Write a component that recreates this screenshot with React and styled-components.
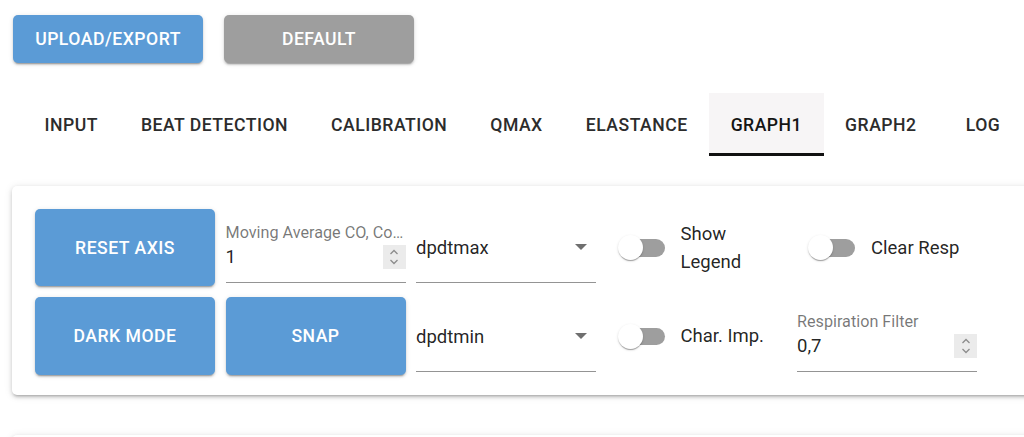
import React from "react";
import styled, { createGlobalStyle, css } from "styled-components";

const GlobalStyle = createGlobalStyle`
  html, body {
    margin: 0;
    padding: 0;
    background: #ffffff;
    overflow: hidden;
    font-family: Roboto, "Liberation Sans", Arial, sans-serif;
  }
  * { box-sizing: border-box; }
`;

const Page = styled.div`
  padding-top: 15px;
  width: 1024px;
  height: 437px;
  overflow: hidden;
`;

const TopBar = styled.div`
  display: flex;
  gap: 21px;
  padding-left: 13px;
`;

const elevation2 = css`
  box-shadow: 0px 3px 1px -2px rgba(0, 0, 0, 0.2), 0px 2px 2px 0px rgba(0, 0, 0, 0.14),
    0px 1px 5px 0px rgba(0, 0, 0, 0.12);
`;

const ActionButton = styled.button`
  width: ${(p) => p.$w || 190}px;
  height: ${(p) => p.$h || 48}px;
  border: none;
  border-radius: 5px;
  background: ${(p) => (p.$grey ? "#9e9e9e" : "#5b9bd6")};
  color: #ffffff;
  font-family: Roboto, "Liberation Sans", Arial, sans-serif;
  font-weight: 500;
  font-size: 17.6px;
  letter-spacing: 0.5px;
  text-transform: uppercase;
  display: flex;
  align-items: center;
  justify-content: center;
  padding: 0;
  cursor: pointer;
  ${elevation2}
`;

const TabsBar = styled.div`
  display: flex;
  margin-top: 30px;
  padding-left: 23px;
  height: 63px;
`;

const Tab = styled.div`
  flex: none;
  height: 63px;
  min-width: 90px;
  padding: 3px 21.5px 0;
  display: flex;
  align-items: center;
  justify-content: center;
  font-weight: 500;
  font-size: 17.6px;
  letter-spacing: 0.5px;
  text-transform: uppercase;
  white-space: nowrap;
  color: ${(p) => (p.$active ? "#141414" : "#2c2c2c")};
  background: ${(p) => (p.$active ? "#f7f5f6" : "transparent")};
  border-bottom: 3px solid ${(p) => (p.$active ? "#111111" : "transparent")};
`;

const Panel = styled.div`
  margin-top: 30px;
  margin-left: 12px;
  width: 1040px;
  padding: 23px 23px 20px;
  border-radius: 5px;
  background: #ffffff;
  box-shadow: 0px 3px 3px -2px rgba(0, 0, 0, 0.22), 0px 2px 4px 0px rgba(0, 0, 0, 0.14),
    0px 1px 8px 0px rgba(0, 0, 0, 0.1);
`;

const LowerPanel = styled(Panel)`
  margin-top: 40px;
  height: 120px;
`;

const ControlGrid = styled.div`
  display: grid;
  grid-template-columns: repeat(5, 180px);
  grid-template-rows: 77px 78px;
  column-gap: 10.5px;
  row-gap: 11px;
`;

const FieldCell = styled.div`
  display: flex;
  flex-direction: column;
  justify-content: flex-end;
  padding-bottom: 3px;
  min-width: 0;
`;

const FieldLabel = styled.div`
  font-size: 16.2px;
  line-height: 18px;
  color: rgba(0, 0, 0, 0.54);
  white-space: nowrap;
  overflow: hidden;
  text-overflow: ellipsis;
  margin-bottom: 3px;
`;

const InputRow = styled.div`
  display: flex;
  align-items: center;
  justify-content: space-between;
  height: ${(p) => (p.$select ? 47 : 38)}px;
  padding-bottom: ${(p) => (p.$select ? 23 : 13)}px;
  border-bottom: 1px solid rgba(0, 0, 0, 0.42);
`;

const InputValue = styled.span`
  font-size: 18.5px;
  line-height: 24px;
  color: rgba(0, 0, 0, 0.87);
`;

const Spinner = styled.span`
  width: 23px;
  height: 24px;
  background: #ebebeb;
  display: flex;
  align-items: center;
  justify-content: center;
`;

const SelectArrow = styled.span`
  width: 0;
  height: 0;
  border-left: 6.5px solid transparent;
  border-right: 6.5px solid transparent;
  border-top: 6.5px solid #6f6f6f;
  margin-right: 9px;
  margin-top: -2px;
`;

const SwitchCell = styled.div`
  display: flex;
  align-items: center;
`;

const SwitchRoot = styled.span`
  position: relative;
  flex: none;
  width: 73px;
  height: 47px;
`;

const SwitchTrack = styled.span`
  position: absolute;
  left: 15px;
  top: 15px;
  width: 43px;
  height: 17.5px;
  border-radius: 9px;
  background: #9e9e9e;
`;

const SwitchThumb = styled.span`
  position: absolute;
  left: 11px;
  top: 11px;
  width: 25px;
  height: 25px;
  border-radius: 50%;
  background: #ffffff;
  box-shadow: 0px 2px 1px -1px rgba(0, 0, 0, 0.2), 0px 1px 1px 0px rgba(0, 0, 0, 0.14),
    0px 1px 3px 0px rgba(0, 0, 0, 0.12);
`;

const SwitchLabel = styled.span`
  margin-left: 1px;
  font-size: 18.5px;
  line-height: 28px;
  color: rgba(0, 0, 0, 0.87);
  max-width: ${(p) => (p.$narrow ? "70px" : "none")};
`;

const SpinnerIcon = () => (
  <svg width="10" height="18" viewBox="0 0 10 18">
    <polyline points="1.5,6 5,2.5 8.5,6" fill="none" stroke="#8c8c8c" strokeWidth="1.3" />
    <polyline points="1.5,12 5,15.5 8.5,12" fill="none" stroke="#8c8c8c" strokeWidth="1.3" />
  </svg>
);

const NumberField = ({ label, value }) => (
  <FieldCell>
    <FieldLabel>{label}</FieldLabel>
    <InputRow>
      <InputValue>{value}</InputValue>
      <Spinner>
        <SpinnerIcon />
      </Spinner>
    </InputRow>
  </FieldCell>
);

const SelectField = ({ value }) => (
  <FieldCell>
    <InputRow $select>
      <InputValue>{value}</InputValue>
      <SelectArrow />
    </InputRow>
  </FieldCell>
);

const Toggle = ({ label, narrow }) => (
  <SwitchCell>
    <SwitchRoot>
      <SwitchTrack />
      <SwitchThumb />
    </SwitchRoot>
    <SwitchLabel $narrow={narrow}>{label}</SwitchLabel>
  </SwitchCell>
);

const tabs = ["Input", "Beat Detection", "Calibration", "Qmax", "Elastance", "Graph1", "Graph2", "Log"];

export default function App() {
  return (
    <>
      <GlobalStyle />
      <Page>
        <TopBar>
          <ActionButton>Upload/Export</ActionButton>
          <ActionButton $grey>Default</ActionButton>
        </TopBar>
        <TabsBar>
          {tabs.map((t) => (
            <Tab key={t} $active={t === "Graph1"}>
              {t}
            </Tab>
          ))}
        </TabsBar>
        <Panel>
          <ControlGrid>
            <ActionButton $w={180} $h={77}>Reset Axis</ActionButton>
            <NumberField label="Moving Average CO, Compliance" value="1" />
            <SelectField value="dpdtmax" />
            <Toggle label="Show Legend" narrow />
            <Toggle label="Clear Resp" />
            <ActionButton $w={180} $h={78}>Dark Mode</ActionButton>
            <ActionButton $w={180} $h={78}>Snap</ActionButton>
            <SelectField value="dpdtmin" />
            <Toggle label="Char. Imp." />
            <NumberField label="Respiration Filter" value="0,7" />
          </ControlGrid>
        </Panel>
        <LowerPanel />
      </Page>
    </>
  );
}
